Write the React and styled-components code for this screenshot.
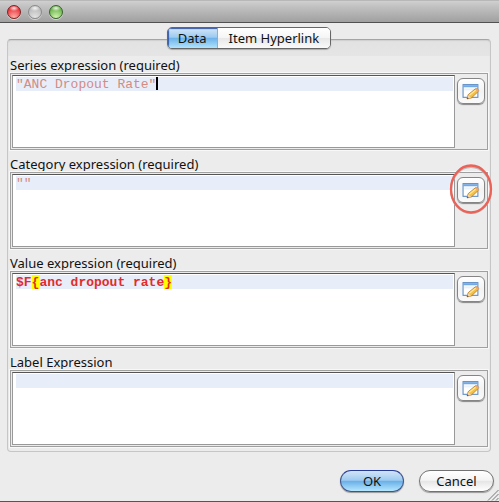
import React from 'react';
import styled, { createGlobalStyle, css } from 'styled-components';

const GlobalStyle = createGlobalStyle`
  * { box-sizing: border-box; }
  body {
    margin: 0;
    background: #ececec;
    color: #111;
    font: 13px/16px "Noto Sans", "Lucida Grande", sans-serif;
  }
`;

const Dialog = styled.div`
  display: flex;
  flex-direction: column;
  min-height: 100vh;
  background: #ececec;
`;

const TitleBar = styled.header`
  display: flex;
  align-items: center;
  gap: 7px;
  height: 23px;
  padding: 1px 7px 0;
  border-top: 1px solid #b8b8b8;
  border-bottom: 1px solid #515151;
  background: linear-gradient(#d0d0d0, #c2c2c2 25%, #a0a0a0);
`;

const lights = {
  red: ['#7c2222', '#e8323a', '#ffb0a8'],
  gray: ['#8a8a8a', '#b9b9b9', '#e4e4e4'],
  green: ['#37622a', '#68b14a', '#d3f5b0'],
};

const Light = styled.button`
  width: 14px;
  height: 14px;
  padding: 0;
  border: 1px solid ${(p) => lights[p.$tone][0]};
  border-radius: 50%;
  background:
    radial-gradient(ellipse 5px 3px at 50% 18%, #ffffffdd, #ffffff00),
    radial-gradient(circle at 50% 95%, ${(p) => lights[p.$tone][2]}, ${(p) => lights[p.$tone][1]} 75%);
  box-shadow: 0 1px 0 #d5d5d5;
`;

const Content = styled.main`
  display: flex;
  flex-direction: column;
  padding: 4px 8px 0 7px;
`;

const Tabs = styled.div`
  display: flex;
  align-self: center;
  z-index: 1;
  height: 22px;
  margin-bottom: -10px;
  border: 1px solid #666;
  border-radius: 5px;
  overflow: hidden;
  box-shadow: 0 1px 1px #aaa;
`;

const Tab = styled.button`
  padding: 0 11px;
  border: 0;
  font: inherit;
  line-height: 19px;
  color: #111;
  background: linear-gradient(#fff, #f5f5f5 48%, #e8e8e8 52%, #fafafa);
  ${(p) => p.$active && css`
    padding: 0 10px;
    border-right: 1px solid #88aed0;
    background: linear-gradient(#d3e6f8, #9ccbf1 46%, #6eb3ea 52%, #b1e3fd);
    box-shadow: inset 1px 1px 1px #3559a5;
  `}
`;

const Panel = styled.section`
  display: flex;
  flex-direction: column;
  gap: 6px;
  padding: 17px 2px 4px;
  border: 1px solid #c6c6c6;
  border-top-color: #a5a5a5;
  border-radius: 4px;
  background: linear-gradient(#e2e2e2, #e5e5e5 16px, #ececec 16px);
  box-shadow: inset 0 1px 1px #d0d0d0;
`;

const Field = styled.div`
  display: flex;
  flex-direction: column;
`;

const Label = styled.label`
  height: 16px;
  line-height: 17px;
  white-space: nowrap;
`;

const Frame = styled.div`
  display: flex;
  align-items: flex-start;
  height: 77px;
  padding: 1px;
  border: 1px solid #a0a0a0;
  outline: 1px solid #f8f8f8;
`;

const textStyles = {
  string: css`color: #d38b83;`,
  variable: css`color: #e02c2c; font-weight: bold;`,
};

const Editor = styled.textarea`
  flex: 1;
  min-width: 0;
  height: 73px;
  padding: 1px 1px 1px 3px;
  border: 1px solid #999;
  border-top-color: #555;
  border-radius: 0;
  outline: 0;
  resize: none;
  overflow: hidden;
  white-space: pre;
  font: 13px/15px "Liberation Mono", "Courier New", monospace;
  ${(p) => textStyles[p.$kind]}
  --line: linear-gradient(#e8eef9, #e8eef9) 0 0 / 100% 14px;
  background: var(--line), #fff;
  background-origin: content-box;
  background-clip: content-box, border-box;
  background-repeat: no-repeat;
  ${(p) => p.$kind === 'variable' && css`
    background:
      linear-gradient(#ff0, #ff0) 2ch 0 / 1ch 14px,
      linear-gradient(#ff0, #ff0) 19ch 0 / 1ch 14px,
      var(--line), #fff;
    background-origin: content-box;
    background-clip: content-box, content-box, content-box, border-box;
    background-repeat: no-repeat;
  `}
  ${(p) => p.$caret && css`
    background: linear-gradient(#000, #000) 18ch 0 / 2px 13px, var(--line), #fff;
    background-origin: content-box;
    background-clip: content-box, content-box, border-box;
    background-repeat: no-repeat;
  `}
`;

const Action = styled.div`
  position: relative;
  padding: 3px 1px 0 2px;
`;

const EditButton = styled.button`
  display: grid;
  place-items: center;
  width: 28px;
  height: 26px;
  padding: 0;
  border: 1px solid #858585;
  border-radius: 6px;
  background: linear-gradient(#fff, #f3f3f3 50%, #fafafa);
  box-shadow: 0 1px 1px #888;
`;

const Ring = styled.svg`
  position: absolute;
  top: -11px;
  left: -6px;
  width: 44px;
  height: 52px;
  pointer-events: none;
`;

const Footer = styled.footer`
  position: relative;
  display: flex;
  justify-content: flex-end;
  gap: 15px;
  margin-top: auto;
  padding: 0 5px 9px;
  border-bottom: 1px solid #555;
`;

const PushButton = styled.button`
  width: ${(p) => (p.$primary ? 64 : 75)}px;
  height: 22px;
  padding: 0;
  border: 1px solid ${(p) => (p.$primary ? '#3f5588' : '#727272')};
  border-top-color: ${(p) => (p.$primary ? '#253b9a' : '#727272')};
  border-radius: 11px;
  font: inherit;
  color: #111;
  background: ${(p) => (p.$primary
    ? 'linear-gradient(#d2e4f7, #9ecbf0 46%, #6bb0e8 52%, #b5e7ff)'
    : 'linear-gradient(#fff, #f4f4f4 46%, #e6e6e6 52%, #fff)')};
  box-shadow: 0 1px 1px #999;
`;

const Grip = styled.svg`
  position: absolute;
  right: 0;
  bottom: 0;
`;

function EditIcon() {
  return (
    <svg width="18" height="17" viewBox="0 0 17 16" aria-hidden="true">
      <rect x="1" y="1.5" width="14" height="12" fill="#fff" stroke="#5b8bc4" />
      <path d="M1 2h14v2H1z" fill="#72a9e4" />
      <path d="M2 5h12v2H2z" fill="#eaf3fc" />
      <path d="M4.8 15l1-4 6.8-5.5c1-.7 3.6.7 3.2 2L9 14z" fill="#f5bf43" stroke="#b27b2a" strokeWidth=".8" />
      <path d="M7 11.5L13 6.5" stroke="#ffe794" strokeWidth="1.3" />
      <path d="M4.8 15l1-3.5L8.6 14z" fill="#f4d8b1" />
      <path d="M4.6 15.2l.5-1.8 1.4 1.3z" fill="#594033" />
      <path d="M12.7 5.5l3 2.3" stroke="#eea77c" strokeWidth="1.4" />
    </svg>
  );
}

const fields = [
  { id: 'series', label: 'Series expression (required)', value: '"ANC Dropout Rate"', kind: 'string', caret: true },
  { id: 'category', label: 'Category expression (required)', value: '""', kind: 'string', ring: true },
  { id: 'value', label: 'Value expression (required)', value: '$F{anc dropout rate}', kind: 'variable' },
  { id: 'label', label: 'Label Expression', value: '', kind: 'string' },
];

function ExpressionField({ id, label, value, kind, caret, ring }) {
  return (
    <Field>
      <Label htmlFor={id}>{label}</Label>
      <Frame>
        <Editor id={id} defaultValue={value} $kind={kind} $caret={caret} spellCheck={false} />
        <Action>
          <EditButton type="button" aria-label={`Edit ${label}`}><EditIcon /></EditButton>
          {ring && (
            <Ring viewBox="0 0 44 52" aria-hidden="true">
              <ellipse cx="22" cy="27" rx="20" ry="23" fill="none" stroke="#bbb" strokeWidth="2" />
              <ellipse cx="22" cy="26" rx="20" ry="23.5" fill="none" stroke="#ec6257" strokeWidth="2.3" />
            </Ring>
          )}
        </Action>
      </Frame>
    </Field>
  );
}

export default function App() {
  return (
    <>
      <GlobalStyle />
      <Dialog role="dialog" aria-label="Data">
        <TitleBar>
          <Light type="button" aria-label="Close" $tone="red" />
          <Light type="button" aria-label="Minimize" $tone="gray" />
          <Light type="button" aria-label="Zoom" $tone="green" />
        </TitleBar>
        <Content>
          <Tabs role="tablist">
            <Tab type="button" role="tab" aria-selected="true" $active>Data</Tab>
            <Tab type="button" role="tab" aria-selected="false">Item Hyperlink</Tab>
          </Tabs>
          <Panel>
            {fields.map((f) => <ExpressionField key={f.id} {...f} />)}
          </Panel>
        </Content>
        <Footer>
          <PushButton type="button" $primary>OK</PushButton>
          <PushButton type="button">Cancel</PushButton>
          <Grip width="12" height="12" viewBox="0 0 12 12" aria-hidden="true">
            <path d="M1 11.5L11.5 1M5 11.5L11.5 5M9 11.5L11.5 9" stroke="#777" fill="none" />
          </Grip>
        </Footer>
      </Dialog>
    </>
  );
}
